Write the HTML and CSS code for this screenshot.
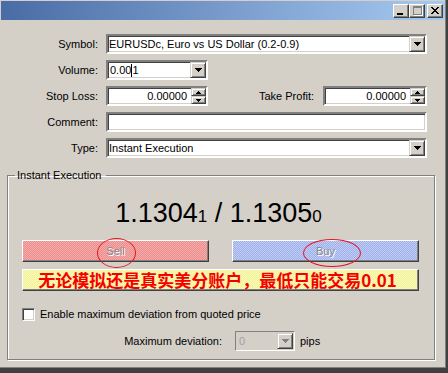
FILE: index.html
```html
<!DOCTYPE html>
<html>
<head>
<meta charset="utf-8">
<link rel="stylesheet" href="styles.css">
</head>
<body>
<div class="window">
  <div class="titlebar">
    <span class="tbtn min"><span class="min-bar"></span></span>
    <span class="tbtn max"><span class="max-box"></span></span>
    <span class="tbtn close">
      <svg width="8" height="7" viewBox="0 0 8 7" shape-rendering="crispEdges"><path d="M0 0h2v1h1v1h2v-1h1v-1h2v1h-1v1h-1v1h-1v1h1v1h1v1h1v1h-2v-1h-1v-1h-2v1h-1v1h-2v-1h1v-1h1v-1h1v-1h-1v-1h-1v-1h-1z"/></svg>
    </span>
  </div>
  <div class="content">
    <div class="form">
      <span class="lbl">Symbol:</span>
      <div class="combo">
        <span class="val">EURUSDc, Euro vs US Dollar (0.2-0.9)</span>
        <span class="dd"><svg width="7" height="4" viewBox="0 0 7 4" shape-rendering="crispEdges"><path d="M0 0h7v1h-1v1h-1v1h-1v1h-1v-1h-1v-1h-1v-1h-1z"/></svg></span>
      </div>
      <span class="lbl">Volume:</span>
      <div class="ctrl-row">
        <div class="combo vol">
          <span class="val pad">0.00<span class="caret"></span>1</span>
          <span class="dd"><svg width="7" height="4" viewBox="0 0 7 4" shape-rendering="crispEdges"><path d="M0 0h7v1h-1v1h-1v1h-1v1h-1v-1h-1v-1h-1v-1h-1z"/></svg></span>
        </div>
      </div>
      <span class="lbl">Stop Loss:</span>
      <div class="ctrl-row">
        <div class="combo spin">
          <span class="val num">0.00000</span>
          <span class="spins">
            <span class="sbtn"><svg width="5" height="3" viewBox="0 0 5 3" shape-rendering="crispEdges"><path d="M2 0h1v1h1v1h1v1h-5v-1h1v-1h1z"/></svg></span>
            <span class="sbtn"><svg width="5" height="3" viewBox="0 0 5 3" shape-rendering="crispEdges"><path d="M0 0h5v1h-1v1h-1v1h-1v-1h-1v-1h-1z"/></svg></span>
          </span>
        </div>
        <span class="tp-lbl">Take Profit:</span>
        <div class="combo spin tp">
          <span class="val num">0.00000</span>
          <span class="spins">
            <span class="sbtn"><svg width="5" height="3" viewBox="0 0 5 3" shape-rendering="crispEdges"><path d="M2 0h1v1h1v1h1v1h-5v-1h1v-1h1z"/></svg></span>
            <span class="sbtn"><svg width="5" height="3" viewBox="0 0 5 3" shape-rendering="crispEdges"><path d="M0 0h5v1h-1v1h-1v1h-1v-1h-1v-1h-1z"/></svg></span>
          </span>
        </div>
      </div>
      <span class="lbl">Comment:</span>
      <div class="combo"><span class="val"></span></div>
      <span class="lbl">Type:</span>
      <div class="combo">
        <span class="val">Instant Execution</span>
        <span class="dd"><svg width="7" height="4" viewBox="0 0 7 4" shape-rendering="crispEdges"><path d="M0 0h7v1h-1v1h-1v1h-1v1h-1v-1h-1v-1h-1v-1h-1z"/></svg></span>
      </div>
    </div>

    <fieldset class="group">
      <legend>Instant Execution</legend>
      <div class="price">1.1304<span class="small">1</span> / 1.1305<span class="small">0</span></div>
      <div class="trade-btns">
        <div class="tbutton sell"><span class="btxt">Sell</span><span class="ring ring-sell"></span></div>
        <div class="tbutton buy"><span class="btxt">Buy</span><span class="ring ring-buy"></span></div>
      </div>
      <div class="banner">无论模拟还是真实美分账户，最低只能交易0.01</div>
      <div class="check-row"><span class="checkbox"></span><span>Enable maximum deviation from quoted price</span></div>
      <div class="dev-row">
        <span class="dev-lbl">Maximum deviation:</span>
        <div class="combo dis">
          <span class="val pad">0</span>
          <span class="dd"><svg width="7" height="4" viewBox="0 0 7 4" shape-rendering="crispEdges"><path fill="#808080" d="M0 0h7v1h-1v1h-1v1h-1v1h-1v-1h-1v-1h-1v-1h-1z"/></svg></span>
        </div>
        <span class="pips">pips</span>
      </div>
    </fieldset>
  </div>
</div>
</body>
</html>
```

FILE: styles.css
```css
html, body {
  margin: 0;
  padding: 0;
}
body {
  width: 448px;
  height: 373px;
  background: #404040;
  font-family: "Liberation Sans", Arial, sans-serif;
  font-size: 11px;
  color: #000;
  overflow: hidden;
}
.window {
  width: 446px;
  height: 368px;
  background: #d4d0c8;
  box-shadow: inset -1px -1px #808080;
  display: flex;
  flex-direction: column;
}
.titlebar {
  height: 19px;
  margin: 1px 1px 0 1px;
  background: linear-gradient(to right, #4a6ca6, #a6caf0);
  display: flex;
  justify-content: flex-end;
  align-items: center;
  padding-right: 2px;
}
.tbtn {
  width: 16px;
  height: 14px;
  box-sizing: border-box;
  background: #d4d0c8;
  border: 1px solid;
  border-color: #fff #404040 #404040 #fff;
  box-shadow: inset -1px -1px #808080;
  display: flex;
  align-items: center;
  justify-content: center;
  position: relative;
}
.tbtn.close {
  margin-left: 2px;
}
.min-bar {
  width: 6px;
  height: 2px;
  background: #000;
  margin-top: 6px;
  margin-right: 3px;
}
.max-box {
  width: 7px;
  height: 6px;
  border: 1px solid #808080;
  border-top-width: 2px;
  box-shadow: 1px 1px #fff;
}
.content {
  flex: 1;
  display: flex;
  flex-direction: column;
}
.form {
  display: grid;
  grid-template-columns: 98px 321px;
  column-gap: 8px;
  row-gap: 6px;
  margin-top: 14px;
  grid-auto-rows: 20px;
  align-items: center;
}
.lbl {
  text-align: right;
}
.combo {
  height: 20px;
  box-sizing: border-box;
  border: 2px solid;
  border-color: #808080 #fff #fff #808080;
  box-shadow: inset 1px 1px #404040, inset -1px -1px #d4d0c8;
  background: #fff;
  display: flex;
  align-items: stretch;
}
.combo .val {
  flex: 1;
  display: flex;
  align-items: center;
  padding-left: 1px;
  white-space: nowrap;
  overflow: hidden;
}
.combo .val.pad {
  padding-left: 2px;
}
.combo .val.num {
  justify-content: flex-end;
  padding-right: 4px;
}
.caret {
  display: inline-block;
  width: 1px;
  height: 13px;
  background: #000;
}
.dd {
  width: 16px;
  height: 16px;
  box-sizing: border-box;
  background: #d4d0c8;
  border: 1px solid;
  border-color: #d4d0c8 #404040 #404040 #d4d0c8;
  box-shadow: inset 1px 1px #fff, inset -1px -1px #808080;
  display: flex;
  align-items: center;
  justify-content: center;
}
.ctrl-row {
  display: flex;
  align-items: center;
}
.vol, .spin {
  width: 102px;
}
.spin.tp {
  width: 104px;
}
.tp-lbl {
  flex: 1;
  text-align: right;
  margin-right: 9px;
}
.spins {
  width: 15px;
  display: flex;
  flex-direction: column;
}
.sbtn {
  height: 8px;
  box-sizing: border-box;
  background: #d4d0c8;
  border: 1px solid;
  border-color: #d4d0c8 #404040 #404040 #d4d0c8;
  box-shadow: inset 1px 1px #fff, inset -1px -1px #808080;
  display: flex;
  align-items: center;
  justify-content: center;
}
.group {
  margin: 11px 0 0 7px;
  width: 428px;
  box-sizing: border-box;
  padding: 0 15px 8px 14px;
  border: 1px solid #808080;
  box-shadow: 1px 1px #fff, inset 1px 1px #fff;
  min-width: 0;
}
.group legend {
  margin-left: -7px;
  padding: 0 5px 0 2px;
  line-height: 13px;
}
.price {
  margin-top: 15px;
  height: 32px;
  line-height: 32px;
  text-align: center;
  font-size: 27px;
  color: #000;
  padding-right: 4px;
}
.price .small {
  font-size: 17px;
}
.trade-btns {
  margin-top: 11px;
  display: grid;
  grid-template-columns: 1fr 1fr;
  column-gap: 23px;
}
.tbutton {
  height: 22px;
  box-sizing: border-box;
  border: 1px solid;
  border-color: #fff #404040 #404040 #fff;
  box-shadow: inset -1px -1px #808080;
  display: flex;
  align-items: center;
  justify-content: center;
  position: relative;
}
.sell {
  background: repeating-conic-gradient(#ff8484 0 25%, #e2b4b4 0 50%) 0 0 / 2px 2px;
}
.buy {
  background: repeating-conic-gradient(#98aef8 0 25%, #c8cee6 0 50%) 0 0 / 2px 2px;
}
.btxt {
  color: #8a8a8a;
  text-shadow: 1px 1px #fff;
}
.ring {
  position: absolute;
  border: 1px solid #e8141c;
  border-radius: 50%;
  box-sizing: border-box;
}
.ring-sell {
  left: 74px;
  top: -3px;
  width: 39px;
  height: 30px;
}
.ring-buy {
  left: 70px;
  top: -2px;
  width: 58px;
  height: 28px;
}
.banner {
  margin-top: 7px;
  height: 22px;
  box-sizing: border-box;
  border: 1px solid;
  border-color: #fff #404040 #404040 #fff;
  box-shadow: inset -1px -1px #808080;
  background: repeating-conic-gradient(#ffff80 0 25%, #ecead0 0 50%) 0 0 / 2px 2px;
  color: #f50000;
  font-family: "Noto Sans CJK SC", sans-serif;
  font-weight: bold;
  font-size: 17px;
  line-height: 20px;
  text-align: center;
  white-space: nowrap;
  padding-right: 6px;
}
.check-row {
  margin-top: 15px;
  height: 16px;
  display: flex;
  align-items: center;
  gap: 5px;
}
.checkbox {
  width: 13px;
  height: 13px;
  box-sizing: border-box;
  border: 1px solid;
  border-color: #808080 #fff #fff #808080;
  box-shadow: inset 1px 1px #404040, inset -1px -1px #d4d0c8;
  background: #fff;
}
.dev-row {
  margin-top: 9px;
  display: flex;
  align-items: center;
}
.dev-lbl {
  width: 200px;
  text-align: right;
  margin-right: 13px;
}
.combo.dis {
  width: 60px;
  background: #d4d0c8;
  border-width: 1px;
  border-color: #808080 #fff #fff #808080;
  box-shadow: none;
  padding: 1px;
}
.combo.dis .val {
  color: #a0a0a0;
}
.pips {
  margin-left: 5px;
}
```
